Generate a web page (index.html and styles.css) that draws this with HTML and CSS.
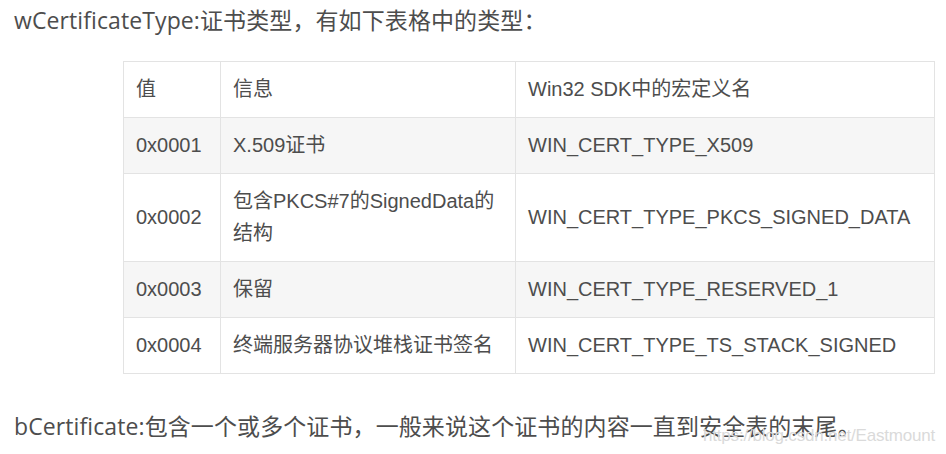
FILE: index.html
```html
<!DOCTYPE html>
<html lang="zh-CN">
<head>
  <meta charset="UTF-8">
  <title>wCertificateType</title>
  <link rel="stylesheet" href="styles.css">
</head>
<body>
  <div class="article">
    <p class="para first">wCertificateType:证书类型，有如下表格中的类型：</p>

    <div class="table-box">
      <table class="cert-table">
        <colgroup>
          <col class="col-val">
          <col class="col-info">
          <col class="col-macro">
        </colgroup>
        <thead>
          <tr>
            <th>值</th>
            <th>信息</th>
            <th>Win32 SDK中的宏定义名</th>
          </tr>
        </thead>
        <tbody>
          <tr>
            <td>0x0001</td>
            <td>X.509证书</td>
            <td>WIN_CERT_TYPE_X509</td>
          </tr>
          <tr>
            <td>0x0002</td>
            <td>包含PKCS#7的SignedData的结构</td>
            <td>WIN_CERT_TYPE_PKCS_SIGNED_DATA</td>
          </tr>
          <tr>
            <td>0x0003</td>
            <td>保留</td>
            <td>WIN_CERT_TYPE_RESERVED_1</td>
          </tr>
          <tr>
            <td>0x0004</td>
            <td>终端服务器协议堆栈证书签名</td>
            <td>WIN_CERT_TYPE_TS_STACK_SIGNED</td>
          </tr>
        </tbody>
      </table>
    </div>

    <p class="para last">bCertificate:包含一个或多个证书，一般来说这个证书的内容一直到安全表的末尾。</p>
    <span class="watermark">https://blog.csdn.net/Eastmount</span>
  </div>
</body>
</html>
```

FILE: styles.css
```css
body {
  margin: 0;
  background: #fff;
  color: #4d4d4d;
}
.article {
  position: relative;
  height: 454px;
  padding: 0 12px 0 14px;
  box-sizing: border-box;
}
.para {
  font-family: "Open Sans", "Noto Sans CJK SC", sans-serif;
  font-size: 23px;
  line-height: 30px;
  margin: 0;
  letter-spacing: 0.1px;
}
.para.first {
  padding-top: 5px;
}
.para.last {
  margin-top: 37px;
}
.table-box {
  margin: 26px 0 0 109px;
}
.cert-table {
  width: 812px;
  border-collapse: collapse;
  table-layout: fixed;
  font-family: "Liberation Sans", "Noto Sans CJK SC", sans-serif;
  font-size: 20px;
  color: #4d4d4d;
}
.col-val {
  width: 97px;
}
.col-info {
  width: 295px;
}
th, td {
  border: 1px solid #e3e3e3;
  padding: 11px 12px 12px;
  line-height: 32px;
  text-align: left;
  font-weight: normal;
  vertical-align: middle;
}
tbody tr:nth-child(odd) {
  background: #f6f6f6;
}
.watermark {
  position: absolute;
  right: 11px;
  top: 426px;
  font-family: "Liberation Sans", sans-serif;
  font-size: 17px;
  color: #dadada;
  letter-spacing: -0.2px;
}
```
